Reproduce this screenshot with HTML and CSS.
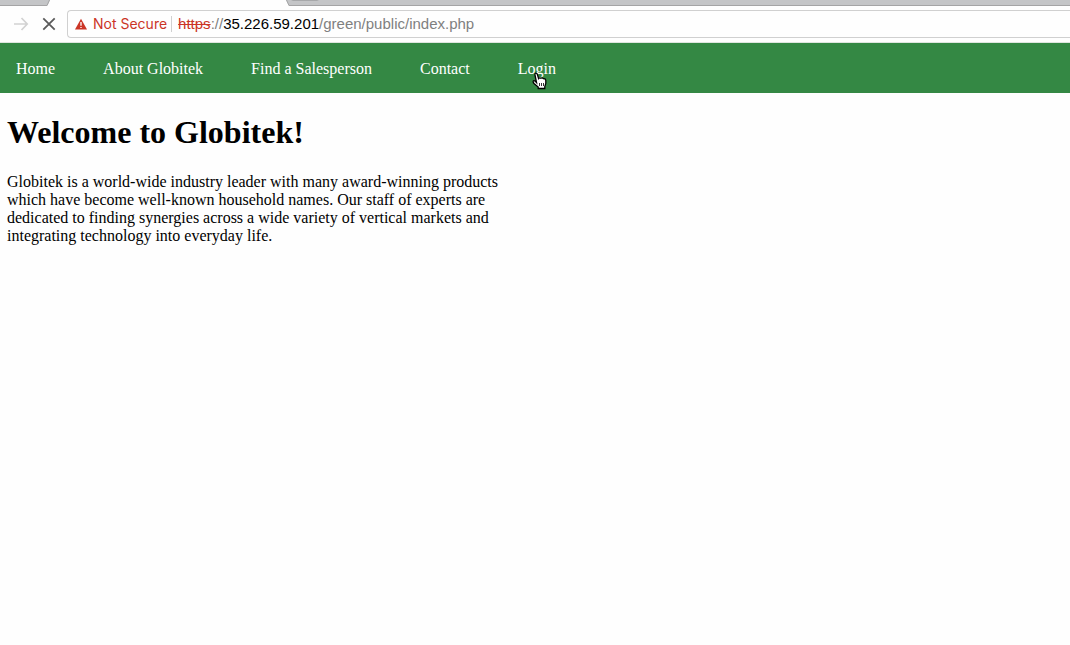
FILE: index.html
```html
<!DOCTYPE html>
<html lang="en">
<head>
<meta charset="utf-8">
<title>Globitek</title>
<link rel="stylesheet" href="styles.css">
</head>
<body>
<div class="browser">
  <div class="tab-strip">
    <svg class="tab-end" width="60" height="6" viewBox="0 0 60 6" aria-hidden="true"><path d="M0 0H50L47.500 5.500H0Z" fill="#c4c5c7"/><path d="M0 5.500H47L49.500 0" fill="none" stroke="#a4a4a5"/></svg>
    <span class="active-tab"></span>
    <svg class="tab-start" width="40" height="6" viewBox="0 0 40 6" aria-hidden="true"><path d="M0 0H40V6H3Z" fill="#c4c5c7"/><path d="M0.500 0L3 5.500H40" fill="none" stroke="#a4a4a5"/><path d="M5 0H33L31 1H7Z" fill="#a7a8aa"/></svg>
    <span class="tab-fill"></span>
  </div>
  <div class="toolbar">
    <button class="tool" type="button" aria-label="Forward" disabled><svg width="16" height="16" viewBox="0 0 16 16"><path d="M1 8H14M8.500 2L14.200 8L8.500 14" fill="none" stroke="#d2d2d2" stroke-width="1.700"/></svg></button>
    <button class="tool" type="button" aria-label="Stop loading"><svg width="16" height="16" viewBox="0 0 16 16"><path d="M2.300 2.300L13.700 13.700M13.700 2.300L2.300 13.700" fill="none" stroke="#5a5a5a" stroke-width="1.800"/></svg></button>
    <div class="address">
      <button class="security" type="button"><svg width="12" height="12" viewBox="0 0 12 12" aria-hidden="true"><path d="M6 .8L12 11.500H0Z" fill="#cb3526"/><path d="M6 4V7.800M6 8.900V10.100" stroke="#fff" stroke-width="1.300"/></svg>Not Secure</button>
      <div class="url" role="textbox" aria-label="Address" contenteditable="true" spellcheck="false"><s class="scheme">https</s>://<span class="host">35.226.59.201</span>/green/public/index.php</div>
    </div>
  </div>
</div>
<nav class="menu">
  <a href="#">Home</a>
  <a href="#">About Globitek</a>
  <a href="#">Find a Salesperson</a>
  <a href="#">Contact</a>
  <a href="#" class="login">Login<svg class="pointer" width="16" height="18" viewBox="0 0 16 18" aria-hidden="true"><path d="M4.500 10.500L3 3Q2.600 1.500 3.700 1.200T5.300 2.300L6.600 6.500Q7.500 5.300 8.900 6.300Q10.300 5.300 11.400 6.700Q13.300 6.200 13.800 8.300V11.500L12.800 14.500V16.500H6.200V15L2 11.500Q.5 9.500 1.500 8.800Q2.600 8.300 4.500 10.500Z" fill="#fff" stroke="#000" stroke-width="1.300"/><path d="M7.500 11V14M9.500 11V14M11.500 11V14" stroke="#000" stroke-width=".8"/></svg></a>
</nav>
<main class="content">
  <h1>Welcome to Globitek!</h1>
  <p>Globitek is a world-wide industry leader with many award-winning products which have become well-known household names. Our staff of experts are dedicated to finding synergies across a wide variety of vertical markets and integrating technology into everyday life.</p>
</main>
</body>
</html>
```
FILE: styles.css
```css
* { box-sizing: border-box; }
body {
  margin: 0;
  background: #fefefe;
  color: #000;
  font: 16px/18px "Liberation Serif", "Times New Roman", serif;
}
.browser {
  border-bottom: 1px solid #dfe5df;
  font-family: Inter, "Liberation Sans", sans-serif;
  font-size: 14px;
}
.tab-strip { display: flex; height: 6px; }
.tab-end, .tab-start { flex: none; }
.active-tab { width: 226px; }
.tab-fill {
  flex: 1;
  background: #c4c5c7;
  border-bottom: 1px solid #a4a4a5;
}
.toolbar {
  display: flex;
  align-items: center;
  padding: 4px 0 4px 13px;
}
.tool {
  display: flex;
  width: 16px;
  margin-right: 12px;
  padding: 0;
  border: 0;
  background: none;
}
.tool + .tool { margin-right: 10px; }
.address {
  display: flex;
  flex: 1;
  align-items: center;
  height: 28px;
  padding-left: 7px;
  border: 1px solid #d0d0d0;
  border-right: 0;
  border-radius: 4px 0 0 4px;
}
.security {
  display: flex;
  align-items: center;
  gap: 6px;
  height: 16px;
  padding: 0 4px 0 0;
  border: 0;
  border-right: 1px solid #d0d0d0;
  background: none;
  color: #cb3526;
  font: inherit;
  white-space: nowrap;
}
.url {
  flex: 1;
  padding-left: 6px;
  color: #808080;
  font-family: "Liberation Sans", Arial, sans-serif;
  font-size: 15px;
  outline: 0;
  white-space: nowrap;
}
.scheme { color: #cb3526; }
.host { color: #000; }
.menu {
  display: flex;
  flex-wrap: wrap;
  gap: 16px 48px;
  padding: 17px 16px 15px;
  background: #348844;
}
.menu a { color: #fff; text-decoration: none; }
.login { position: relative; }
.pointer { position: absolute; left: 14px; top: 12px; }
.content { max-width: 507px; padding: 20px 7px; }
h1 { margin: 0 0 22px; font-size: 32px; line-height: 38px; }
p { margin: 0; }
```
